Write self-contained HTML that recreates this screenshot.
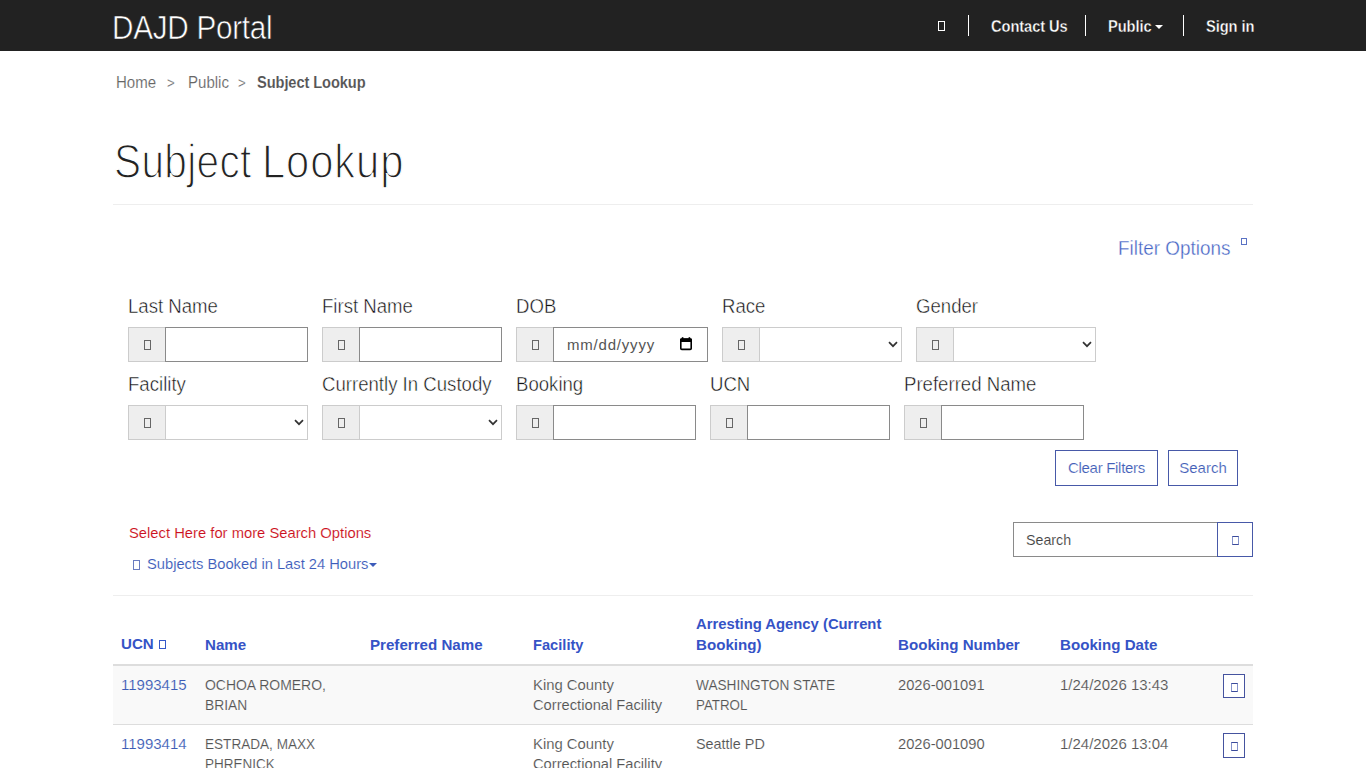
<!DOCTYPE html>
<html>
<head>
<meta charset="utf-8">
<style>
*{box-sizing:border-box;margin:0;padding:0}
html,body{width:1366px;height:768px;overflow:hidden;background:#fff}
body{font-family:"Liberation Sans",sans-serif;color:#333;position:relative}
.a{position:absolute;white-space:nowrap}
.nav{position:absolute;left:0;top:0;width:1366px;height:51px;background:#222}
.brand{left:112px;top:8.5px;font-size:33px;color:#fff;-webkit-text-stroke:0.6px #222;letter-spacing:-0.3px;transform:scaleX(0.9);transform-origin:0 0}
.nv{color:#fff;font-weight:bold;font-size:16.5px;top:16.5px;letter-spacing:-0.1px;transform:scaleX(0.89);transform-origin:0 0;-webkit-text-stroke:0.35px #222}
.sep{position:absolute;top:15px;width:1px;height:21px;background:#fff;box-shadow:0 0 0.6px #fff}
.tofu{position:absolute;border:1px solid currentColor}
.bc{top:73.5px;font-size:16px;color:#666;transform:scaleX(0.94);transform-origin:0 0;-webkit-text-stroke:0.15px #fff}
h1{position:absolute;top:134px;font-size:48px;letter-spacing:1px;transform:scaleX(0.87);transform-origin:0 0;font-weight:normal;color:#222;-webkit-text-stroke:1.4px #fff;white-space:nowrap}
.hr{position:absolute;left:113px;width:1140px;height:1px;background:#eee}
.lbl{position:absolute;font-size:20px;color:#111;white-space:nowrap;transform:scaleX(0.93);transform-origin:0 0;-webkit-text-stroke:0.45px #fff;margin-top:1px}
.ig{position:absolute;height:35px}
.ig .ad{position:absolute;left:0;top:0;width:38px;height:35px;background:#eee;border:1px solid #ccc}
.ig .in{position:absolute;left:37px;top:0;right:0;height:35px;background:#fff;border:1px solid #8a8a8a}
.ig .in.sel{border-color:#ccc}
.btn{position:absolute;border:1px solid #4759a8;color:#4360b8;font-size:15px;text-align:center;background:#fff;-webkit-text-stroke:0.15px #fff}
th,td{text-align:left}
.th{font-size:15.5px;font-weight:bold;color:#3553c6;margin-top:1px;transform:scaleX(var(--s,0.975));transform-origin:0 0}
.td{font-size:15px;color:#555;transform:scaleX(var(--s,1));transform-origin:0 0;-webkit-text-stroke:0.12px #fff}
.td.r1{-webkit-text-stroke-color:#f9f9f9}
.td.lk{color:#3b5bb5}
.rb{width:22px;height:24px;border:1px solid #45539f;background:#fff}
.tf2{color:#3b4a9a;border-left-color:#8593cc;border-right-color:#8593cc}
</style>
</head>
<body>
<div class="nav"></div>
<div class="a brand">DAJD Portal</div>
<div class="tofu" style="left:938px;top:21px;width:7px;height:10px;color:#fff"></div>
<div class="sep" style="left:968px"></div>
<div class="a nv" style="left:991px">Contact Us</div>
<div class="sep" style="left:1085px"></div>
<div class="a nv" style="left:1108px">Public</div>
<div class="a" style="left:1155px;top:25px;width:0;height:0;border-left:4px solid transparent;border-right:4px solid transparent;border-top:4px solid #fff"></div>
<div class="sep" style="left:1183px"></div>
<div class="a nv" style="left:1206px">Sign in</div>

<div class="a bc" style="left:116px">Home</div>
<div class="a bc" style="left:167px;font-size:14px;margin-top:1px">&gt;</div>
<div class="a bc" style="left:188px">Public</div>
<div class="a bc" style="left:238px;font-size:14px;margin-top:1px">&gt;</div>
<div class="a bc" style="left:257px;font-weight:bold;color:#555;letter-spacing:-0.1px;transform:scaleX(0.915);-webkit-text-stroke:0.1px #fff">Subject Lookup</div>

<h1 style="left:114px;transform:scaleX(0.845);letter-spacing:0.4px">Subject</h1><h1 id="h1b" style="left:262px">Lookup</h1>
<div class="hr" style="top:204px"></div>


<div class="a" style="left:1118px;top:236px;font-size:21px;color:#4463c4;transform:scaleX(0.9);transform-origin:0 0;-webkit-text-stroke:0.35px #fff">Filter Options</div>
<div class="tofu" style="left:1241px;top:238px;width:6px;height:7px;color:#5a72c4"></div>

<div class="lbl" style="left:128px;top:294px">Last Name</div>
<div class="lbl" style="left:322px;top:294px">First Name</div>
<div class="lbl" style="left:516px;top:294px">DOB</div>
<div class="lbl" style="left:722px;top:294px">Race</div>
<div class="lbl" style="left:916px;top:294px">Gender</div>

<div class="ig" style="left:128px;top:327px;width:180px"><div class="ad"><div class="tofu" style="left:15px;top:12px;width:7px;height:10px;color:#666"></div></div><div class="in"></div></div>
<div class="ig" style="left:322px;top:327px;width:180px"><div class="ad"><div class="tofu" style="left:15px;top:12px;width:7px;height:10px;color:#666"></div></div><div class="in"></div></div>
<div class="ig" style="left:516px;top:327px;width:192px"><div class="ad"><div class="tofu" style="left:15px;top:12px;width:7px;height:10px;color:#666"></div></div><div class="in"><span class="a" style="left:13px;top:8px;font-size:15px;color:#555;letter-spacing:0.8px">mm/dd/yyyy</span><svg class="a" style="left:126px;top:9px" width="12" height="14" viewBox="0 0 12 14"><rect x="0.8" y="2" width="10.4" height="10.4" rx="1" fill="none" stroke="#000" stroke-width="1.6"/><rect x="0" y="1.6" width="12" height="3.4" rx="1" fill="#000"/><rect x="1.8" y="0.2" width="1.6" height="2" fill="#000"/><rect x="8.6" y="0.2" width="1.6" height="2" fill="#000"/></svg></div></div>
<div class="ig" style="left:722px;top:327px;width:180px"><div class="ad"><div class="tofu" style="left:15px;top:12px;width:7px;height:10px;color:#666"></div></div><div class="in sel"><svg class="a" style="left:128px;top:13px" width="10" height="7" viewBox="0 0 10 7"><path d="M1 1.2 L5 5.2 L9 1.2" fill="none" stroke="#333" stroke-width="1.7"/></svg></div></div>
<div class="ig" style="left:916px;top:327px;width:180px"><div class="ad"><div class="tofu" style="left:15px;top:12px;width:7px;height:10px;color:#666"></div></div><div class="in sel"><svg class="a" style="left:128px;top:13px" width="10" height="7" viewBox="0 0 10 7"><path d="M1 1.2 L5 5.2 L9 1.2" fill="none" stroke="#333" stroke-width="1.7"/></svg></div></div>

<div class="lbl" style="left:128px;top:372px">Facility</div>
<div class="lbl" style="left:322px;top:372px">Currently In Custody</div>
<div class="lbl" style="left:516px;top:372px">Booking</div>
<div class="lbl" style="left:710px;top:372px">UCN</div>
<div class="lbl" style="left:904px;top:372px">Preferred Name</div>

<div class="ig" style="left:128px;top:405px;width:180px"><div class="ad"><div class="tofu" style="left:15px;top:12px;width:7px;height:10px;color:#666"></div></div><div class="in sel"><svg class="a" style="left:128px;top:13px" width="10" height="7" viewBox="0 0 10 7"><path d="M1 1.2 L5 5.2 L9 1.2" fill="none" stroke="#333" stroke-width="1.7"/></svg></div></div>
<div class="ig" style="left:322px;top:405px;width:180px"><div class="ad"><div class="tofu" style="left:15px;top:12px;width:7px;height:10px;color:#666"></div></div><div class="in sel"><svg class="a" style="left:128px;top:13px" width="10" height="7" viewBox="0 0 10 7"><path d="M1 1.2 L5 5.2 L9 1.2" fill="none" stroke="#333" stroke-width="1.7"/></svg></div></div>
<div class="ig" style="left:516px;top:405px;width:180px"><div class="ad"><div class="tofu" style="left:15px;top:12px;width:7px;height:10px;color:#666"></div></div><div class="in"></div></div>
<div class="ig" style="left:710px;top:405px;width:180px"><div class="ad"><div class="tofu" style="left:15px;top:12px;width:7px;height:10px;color:#666"></div></div><div class="in"></div></div>
<div class="ig" style="left:904px;top:405px;width:180px"><div class="ad"><div class="tofu" style="left:15px;top:12px;width:7px;height:10px;color:#666"></div></div><div class="in"></div></div>

<div class="btn" style="left:1055px;top:450px;width:103px;height:36px;line-height:34px;letter-spacing:-0.3px">Clear Filters</div>
<div class="btn" style="left:1168px;top:450px;width:70px;height:36px;line-height:34px">Search</div>

<div class="a" style="left:129px;top:524px;font-size:15px;color:#cc1020;transform:scaleX(0.985);transform-origin:0 0;-webkit-text-stroke:0.12px #fff">Select Here for more Search Options</div>
<div class="tofu" style="left:133px;top:560px;width:7px;height:10px;color:#6a7cc0"></div>
<div class="a" style="left:147px;top:555px;font-size:15px;color:#3c5cba;transform:scaleX(0.98);transform-origin:0 0;-webkit-text-stroke:0.12px #fff">Subjects Booked in Last 24 Hours</div>
<div class="a" style="left:369px;top:563px;width:0;height:0;border-left:4px solid transparent;border-right:4px solid transparent;border-top:4px solid #3c5cba"></div>

<div class="a" style="left:1013px;top:522px;width:205px;height:35px;border:1px solid #8a8a8a;background:#fff"><span class="a" style="left:12px;top:8px;font-size:15px;color:#444;transform:scaleX(0.95);transform-origin:0 0;-webkit-text-stroke:0.12px #fff">Search</span></div>
<div class="a" style="left:1217px;top:522px;width:36px;height:35px;border:1px solid #4759a8;background:#fff"><div class="tofu" style="left:14px;top:13px;width:7px;height:9px;color:#3b4a9a;border-left-color:#8593cc;border-right-color:#8593cc"></div></div>

<div class="hr" style="top:595px"></div>

<div class="a th" style="left:121px;top:633.5px">UCN</div>
<div class="tofu" style="left:159px;top:640px;width:7px;height:9px;color:#3558c8"></div>
<div class="a th" style="left:205px;top:635px">Name</div>
<div class="a th" style="left:370px;top:635px">Preferred Name</div>
<div class="a th" style="left:533px;top:635px;--s:0.945">Facility</div>
<div class="a th" style="left:696px;top:614px;--s:0.955">Arresting Agency (Current</div>
<div class="a th" style="left:696px;top:635px">Booking)</div>
<div class="a th" style="left:898px;top:635px">Booking Number</div>
<div class="a th" style="left:1060px;top:635px">Booking Date</div>

<div class="a" style="left:113px;top:664px;width:1140px;height:2px;background:#ddd"></div>
<div class="a" style="left:113px;top:666px;width:1140px;height:58px;background:#f9f9f9"></div>
<div class="a" style="left:113px;top:724px;width:1140px;height:1px;background:#ddd"></div>

<div class="a td lk r1" style="left:121px;top:676px">11993415</div>
<div class="a td r1" style="left:205px;top:676px;--s:0.93">OCHOA ROMERO,</div>
<div class="a td r1" style="left:205px;top:696px;--s:0.92">BRIAN</div>
<div class="a td r1" style="left:533px;top:676px;--s:0.99">King County</div>
<div class="a td r1" style="left:533px;top:696px;--s:0.98">Correctional Facility</div>
<div class="a td r1" style="left:696px;top:676px;--s:0.91">WASHINGTON STATE</div>
<div class="a td r1" style="left:696px;top:696px;--s:0.89">PATROL</div>
<div class="a td r1" style="left:898px;top:676px;--s:0.98">2026-001091</div>
<div class="a td r1" style="left:1060px;top:676px">1/24/2026 13:43</div>
<div class="a rb" style="left:1223px;top:674px"><div class="tofu tf2" style="left:7px;top:8px;width:7px;height:9px"></div></div>

<div class="a td lk" style="left:121px;top:735px">11993414</div>
<div class="a td" style="left:205px;top:735px;--s:0.905">ESTRADA, MAXX</div>
<div class="a td" style="left:205px;top:755px;--s:0.9">PHRENICK</div>
<div class="a td" style="left:533px;top:735px;--s:0.99">King County</div>
<div class="a td" style="left:533px;top:755px;--s:0.98">Correctional Facility</div>
<div class="a td" style="left:696px;top:735px;--s:0.96">Seattle PD</div>
<div class="a td" style="left:898px;top:735px;--s:0.98">2026-001090</div>
<div class="a td" style="left:1060px;top:735px">1/24/2026 13:04</div>
<div class="a rb" style="left:1223px;top:733px;height:25px"><div class="tofu tf2" style="left:7px;top:8px;width:7px;height:9px"></div></div>
</body>
</html>
